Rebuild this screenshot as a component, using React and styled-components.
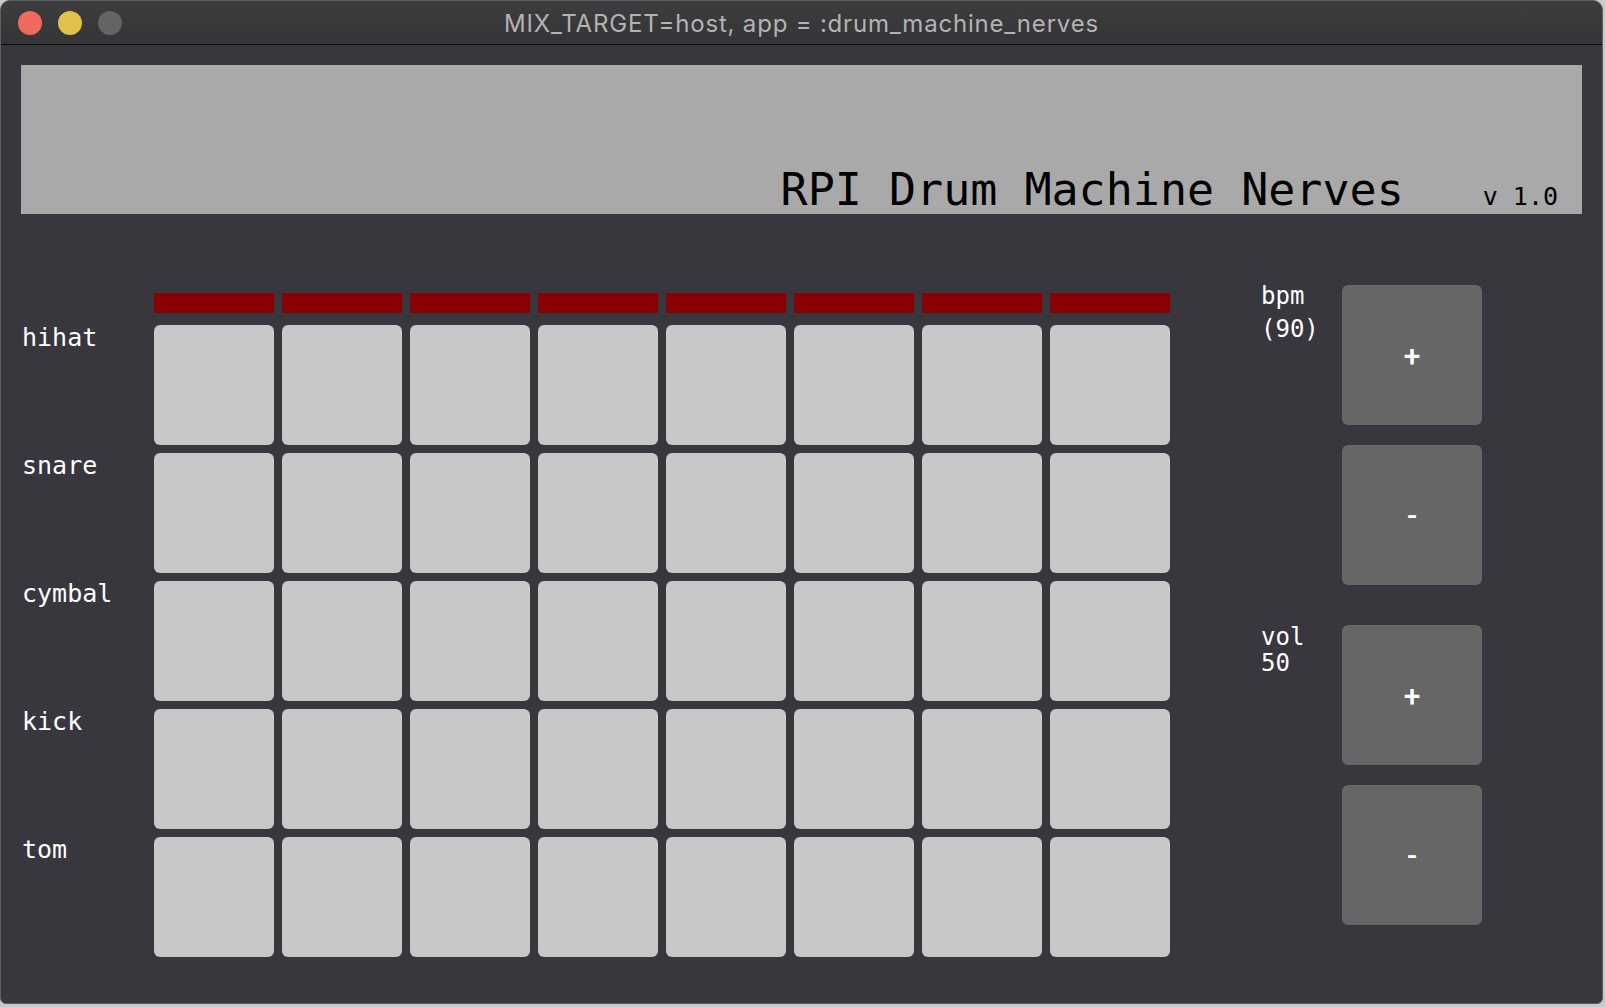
import styled, { createGlobalStyle } from "styled-components";

const GlobalStyle = createGlobalStyle`
  html, body {
    margin: 0;
    padding: 0;
    background: #c9c9c9;
  }
  * {
    box-sizing: border-box;
  }
`;

const Window = styled.div`
  width: 1603px;
  height: 1004px;
  border: 1px solid #5e5e60;
  border-radius: 10px 10px 6px 6px;
  overflow: hidden;
  background: #38373d;
  display: flex;
  flex-direction: column;
`;

const TitleBar = styled.div`
  position: relative;
  height: 44px;
  flex: none;
  display: flex;
  align-items: center;
  justify-content: center;
  background: linear-gradient(#3d3d3f, #353537);
  border-bottom: 1px solid #0c0c0c;
`;

const Lights = styled.div`
  position: absolute;
  left: 17px;
  top: 10px;
  display: flex;
  gap: 16px;
`;

const Light = styled.span`
  width: 24px;
  height: 24px;
  border-radius: 50%;
  background: ${(p) => p.color};
`;

const WindowTitle = styled.span`
  font-family: Inter, "Liberation Sans", sans-serif;
  font-size: 24px;
  letter-spacing: 0.8px;
  color: #b3b3b3;
  margin-top: 2px;
`;

const Content = styled.div`
  flex: 1;
  padding: 20px 20px 0 20px;
  font-family: "DejaVu Sans Mono", "Liberation Mono", monospace;
`;

const Header = styled.div`
  height: 149px;
  background: #a9a9a9;
  display: flex;
  justify-content: flex-end;
  align-items: flex-end;
  padding: 0 24px 2px 0;
`;

const TitleRow = styled.div`
  display: flex;
  align-items: baseline;
  gap: 79px;
  color: #000;
`;

const Title = styled.span`
  font-size: 45px;
  line-height: 1;
`;

const Version = styled.span`
  font-size: 25px;
  line-height: 1;
`;

const Main = styled.div`
  display: flex;
  margin-top: 71px;
`;

const Sequencer = styled.div`
  display: grid;
  grid-template-columns: 125px repeat(8, 120px);
  grid-template-rows: 24px;
  grid-auto-rows: 120px;
  gap: 8px;
  margin-top: 8px;
`;

const Step = styled.div`
  background: #880000;
  height: 20px;
`;

const Spacer = styled.div``;

const TrackLabel = styled.div`
  color: #fff;
  font-size: 25px;
  line-height: 28px;
  margin-top: -1px;
  padding-left: 1px;
`;

const Pad = styled.div`
  background: #c8c8c8;
  border-radius: 6px;
`;

const Controls = styled.div`
  margin-left: 91px;
  display: flex;
  flex-direction: column;
  gap: 40px;
`;

const ControlGroup = styled.div`
  display: flex;
`;

const ControlLabel = styled.div`
  width: 81px;
  color: #fff;
  font-size: 24px;
  line-height: ${(p) => p.lh}px;
  margin-top: ${(p) => p.offset}px;
  white-space: pre;
`;

const Buttons = styled.div`
  display: flex;
  flex-direction: column;
  gap: 20px;
`;

const Button = styled.div`
  width: 140px;
  height: 140px;
  background: #666666;
  border-radius: 6px;
  display: flex;
  align-items: center;
  justify-content: center;
  color: #fff;
  font-family: Roboto, "DejaVu Sans", sans-serif;
  font-size: 30px;
  font-weight: 500;
`;

const tracks = ["hihat", "snare", "cymbal", "kick", "tom"];
const steps = [0, 1, 2, 3, 4, 5, 6, 7];

export default function App() {
  return (
    <>
      <GlobalStyle />
      <Window>
        <TitleBar>
          <Lights>
            <Light color="#ee6a5e" />
            <Light color="#e2c14a" />
            <Light color="#646466" />
          </Lights>
          <WindowTitle>MIX_TARGET=host, app = :drum_machine_nerves</WindowTitle>
        </TitleBar>
        <Content>
          <Header>
            <TitleRow>
              <Title>RPI Drum Machine Nerves</Title>
              <Version>v 1.0</Version>
            </TitleRow>
          </Header>
          <Main>
            <Sequencer>
              <Spacer />
              {steps.map((s) => (
                <Step key={s} />
              ))}
              {tracks.map((t) => [
                <TrackLabel key={t}>{t}</TrackLabel>,
                ...steps.map((s) => <Pad key={t + s} />),
              ])}
            </Sequencer>
            <Controls>
              <ControlGroup>
                <ControlLabel lh={33} offset={-5}>{"bpm\n(90)"}</ControlLabel>
                <Buttons>
                  <Button>+</Button>
                  <Button>-</Button>
                </Buttons>
              </ControlGroup>
              <ControlGroup>
                <ControlLabel lh={26} offset={-1}>{"vol\n50"}</ControlLabel>
                <Buttons>
                  <Button>+</Button>
                  <Button>-</Button>
                </Buttons>
              </ControlGroup>
            </Controls>
          </Main>
        </Content>
      </Window>
    </>
  );
}
